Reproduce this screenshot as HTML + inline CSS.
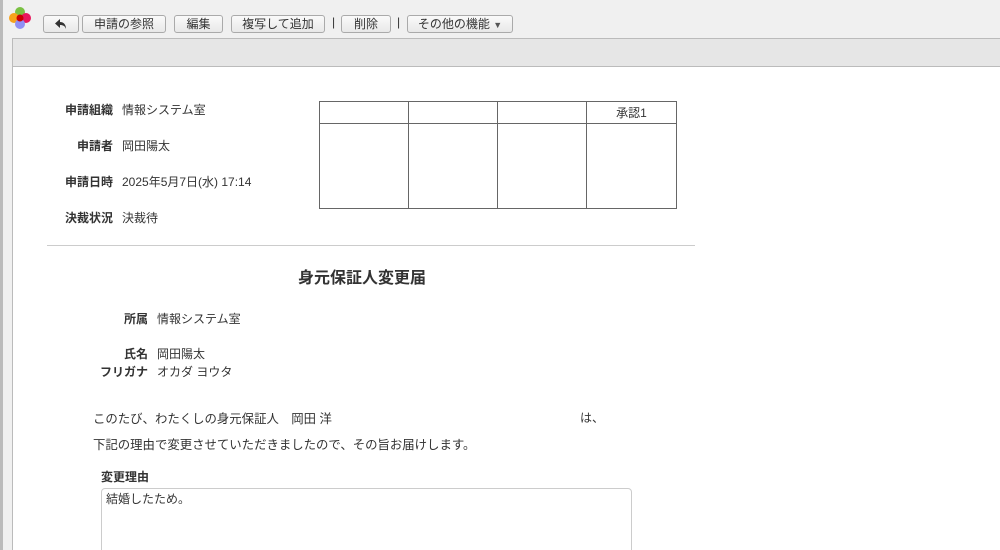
<!DOCTYPE html>
<html><head><meta charset="utf-8"><style>
*{box-sizing:border-box;margin:0;padding:0}
html,body{overflow:hidden}
body{width:1000px;height:550px;background:#f0f0f0;font-family:"Liberation Sans","Noto Sans CJK JP",sans-serif;font-size:12px;color:#333;position:relative}
.a{position:absolute;white-space:nowrap}
.btn{position:absolute;top:15px;height:18px;border:1px solid #aaa;border-radius:3px;background:linear-gradient(#fafafa,#e8e8e8);font-size:12px;line-height:16px;text-align:center;color:#333}
.lb{font-weight:bold;text-align:right}
</style></head><body>
<div class="a" style="left:0;top:0;width:3px;height:550px;background:#bbb"></div>
<svg class="a" style="left:6px;top:5px" width="28" height="26" viewBox="0 0 28 26">
<circle cx="14" cy="7" r="5" fill="#7ac143"/><circle cx="8" cy="13" r="5" fill="#f7a21b"/><circle cx="20" cy="13" r="5" fill="#e8175d"/><circle cx="14" cy="19" r="5" fill="#8f8ff5"/><circle cx="14" cy="13" r="3.5" fill="#c00"/></svg>
<div class="btn" style="left:43px;width:36px"><svg width="14" height="12" viewBox="0 0 14 12" style="margin-top:2px"><path d="M6 1L1 5.5 6 10V7c3 0 5 1 6 4 0-4-2-7-6-7z" fill="#333"/></svg></div>
<div class="btn" style="left:82px;width:84px">申請の参照</div>
<div class="btn" style="left:174px;width:49px">編集</div>
<div class="btn" style="left:231px;width:94px">複写して追加</div>
<div class="a" style="left:332px;top:15px">|</div>
<div class="btn" style="left:341px;width:50px">削除</div>
<div class="a" style="left:397px;top:15px">|</div>
<div class="btn" style="left:407px;width:106px">その他の機能 <span style="font-size:9px;color:#555">▼</span></div>
<div class="a" style="left:12px;top:38px;width:988px;height:29px;background:#e6e6e6;border-top:1px solid #bbb;border-bottom:1px solid #bbb;border-left:1px solid #bbb"></div>
<div class="a" style="left:12px;top:67px;width:988px;height:483px;background:#fff;border-left:1px solid #bbb"></div>
<div class="a lb" style="left:40px;width:73px;top:101px">申請組織</div><div class="a" style="left:122px;top:101px">情報システム室</div>
<div class="a lb" style="left:40px;width:73px;top:137px">申請者</div><div class="a" style="left:122px;top:137px">岡田陽太</div>
<div class="a lb" style="left:40px;width:73px;top:173px">申請日時</div><div class="a" style="left:122px;top:173px">2025年5月7日(水) 17:14</div>
<div class="a lb" style="left:40px;width:73px;top:209px">決裁状況</div><div class="a" style="left:122px;top:209px">決裁待</div>
<table class="a" style="left:319px;top:101px;width:358px;height:108px;border-collapse:collapse;font-size:12px">
<tr style="height:22px"><td style="border:1px solid #666;width:89px"></td><td style="border:1px solid #666;width:89px"></td><td style="border:1px solid #666;width:89px"></td><td style="border:1px solid #666;text-align:center">承認1</td></tr>
<tr><td style="border:1px solid #666"></td><td style="border:1px solid #666"></td><td style="border:1px solid #666"></td><td style="border:1px solid #666"></td></tr></table>
<div class="a" style="left:47px;top:245px;width:648px;height:1px;background:#ccc"></div>
<div class="a" style="left:262px;width:200px;text-align:center;top:264px;font-size:16px;font-weight:bold">身元保証人変更届</div>
<div class="a lb" style="left:80px;width:68px;top:310px">所属</div><div class="a" style="left:157px;top:310px">情報システム室</div>
<div class="a lb" style="left:80px;width:68px;top:345px">氏名</div><div class="a" style="left:157px;top:345px">岡田陽太</div>
<div class="a lb" style="left:80px;width:68px;top:363px">フリガナ</div><div class="a" style="left:157px;top:363px">オカダ ヨウタ</div>
<div class="a" style="left:93px;top:409px;font-size:12.4px">このたび、わたくしの身元保証人　岡田 洋</div><div class="a" style="left:580px;top:409px">は、</div>
<div class="a" style="left:93px;top:435px;font-size:12.4px">下記の理由で変更させていただきましたので、その旨お届けします。</div>
<div class="a" style="left:101px;top:468px;font-weight:bold">変更理由</div>
<div class="a" style="left:101px;top:488px;width:531px;height:70px;border:1px solid #ccc;border-radius:4px;padding:1px 4px">結婚したため。</div>
</body></html>
